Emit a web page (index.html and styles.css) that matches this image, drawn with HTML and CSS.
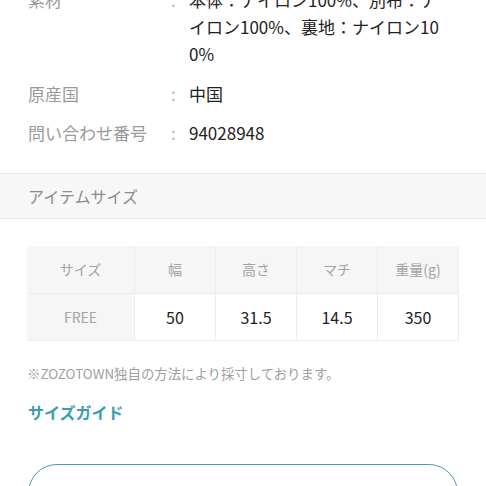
FILE: index.html
```html
<!DOCTYPE html>
<html lang="ja">
<head>
<meta charset="utf-8">
<link rel="stylesheet" href="styles.css">
</head>
<body>
<div class="page">
  <dl class="spec">
    <div class="spec-row">
      <dt class="spec-label">素材</dt>
      <dd class="spec-colon">:</dd>
      <dd class="spec-value">本体：ナイロン100%、別布：ナイロン100%、裏地：ナイロン100%</dd>
    </div>
    <div class="spec-row">
      <dt class="spec-label">原産国</dt>
      <dd class="spec-colon">:</dd>
      <dd class="spec-value">中国</dd>
    </div>
    <div class="spec-row">
      <dt class="spec-label">問い合わせ番号</dt>
      <dd class="spec-colon">:</dd>
      <dd class="spec-value">94028948</dd>
    </div>
  </dl>

  <div class="band">アイテムサイズ</div>

  <div class="size-area">
    <table class="size-table">
      <thead>
        <tr>
          <th>サイズ</th>
          <th>幅</th>
          <th>高さ</th>
          <th>マチ</th>
          <th>重量(g)</th>
        </tr>
      </thead>
      <tbody>
        <tr>
          <th>FREE</th>
          <td>50</td>
          <td>31.5</td>
          <td>14.5</td>
          <td>350</td>
        </tr>
      </tbody>
    </table>

    <p class="note">※ZOZOTOWN独自の方法により採寸しております。</p>
    <a class="guide-link">サイズガイド</a>
    <div class="outline-btn"></div>
  </div>
</div>
</body>
</html>
```

FILE: styles.css
```css
html, body {
  margin: 0;
  padding: 0;
  background: #fff;
}
body {
  font-family: "Noto Sans CJK JP", "Noto Sans", sans-serif;
  color: #333;
  overflow: hidden;
}
.page {
  margin-top: -14px;
}
.spec {
  margin: 0;
  padding: 0 28px;
}
.spec-row {
  display: grid;
  grid-template-columns: 143px 18px 1fr;
  font-size: 17px;
  line-height: 27px;
  margin-bottom: 12.5px;
}
.spec-row:last-child {
  margin-bottom: 0;
}
.spec-label {
  color: #9a9a9a;
}
.spec-colon {
  margin: 0;
  color: #aaa;
}
.spec-value {
  margin: 0;
  color: #222;
  word-break: break-all;
  padding-right: 8px;
}
.band {
  margin-top: 26.5px;
  height: 44px;
  line-height: 44px;
  background: #f7f7f7;
  border-top: 1px solid #e8e8e8;
  border-bottom: 1px solid #e8e8e8;
  padding-left: 28px;
  font-size: 16px;
  color: #8c8c8c;
}
.size-area {
  padding: 27px 27px 0 27px;
}
.size-table {
  width: 432px;
  border-collapse: collapse;
  table-layout: fixed;
}
.size-table th,
.size-table td {
  border: 1px solid #ededed;
  text-align: center;
  font-weight: normal;
  padding: 0;
}
.size-table thead th {
  height: 47px;
  background: #f6f6f6;
  color: #a3a3a3;
  font-size: 14px;
}
.size-table thead th:first-child {
  width: 107px;
}
.size-table tbody th {
  height: 46px;
  background: #f6f6f6;
  color: #a3a3a3;
  font-size: 14px;
}
.size-table tbody td {
  color: #222;
  font-size: 16px;
}
.size-table tr > :first-child {
  border-left: none;
}
.size-table thead tr > * {
  border-top: none;
}
.note {
  margin: 22px 0 0 0;
  font-size: 13.4px;
  line-height: 20px;
  color: #a0a0a0;
}
.guide-link {
  display: block;
  margin-top: 17px;
  font-size: 16px;
  line-height: 24px;
  font-weight: bold;
  color: #3a9db3;
  padding-left: 1px;
}
.outline-btn {
  margin-top: 40px;
  margin-left: 1px;
  width: 428px;
  height: 56px;
  border: 1.5px solid #4a9caf;
  border-radius: 30px;
}
```
